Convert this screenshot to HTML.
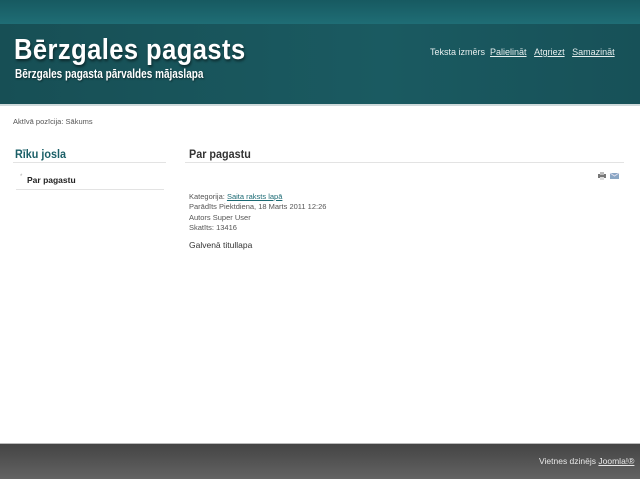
<!DOCTYPE html>
<html><head><meta charset="utf-8"><style>
body{margin:0;width:640px;height:478px;position:relative;background:#fff;font-family:"Liberation Sans",sans-serif;overflow:hidden}
.top{position:absolute;left:0;top:0;width:640px;height:24px;background:linear-gradient(#175a61,#1f6d75)}
.hdr{position:absolute;left:0;top:24px;width:640px;height:80px;background:linear-gradient(90deg,#174f55,#1a5a61 60%,#175158);border-bottom:2px solid #cfdadb}
.t1{position:absolute;left:14px;top:34px;color:#fff;font-size:29px;font-weight:bold;letter-spacing:0.5px;text-shadow:1px 2px 3px rgba(0,0,0,.5);transform:scaleX(0.88);transform-origin:0 0;white-space:nowrap}
.t2{position:absolute;left:15px;top:67px;color:#fff;font-size:12.5px;font-weight:bold;text-shadow:1px 1px 2px rgba(0,0,0,.5);transform:scaleX(0.8);transform-origin:0 0;white-space:nowrap}
.fs{position:absolute;left:430px;top:47px;color:#e6eeee;font-size:9px;white-space:nowrap}
.bc{position:absolute;left:13px;top:117px;font-size:7.5px;color:#555}
.h3{position:absolute;font-size:12px;font-weight:bold;transform:scaleX(0.9);transform-origin:0 0;white-space:nowrap}
.line{position:absolute;height:1px;background:#e3e3e3}
.meta{position:absolute;left:189px;top:192px;font-size:7.5px;color:#555;line-height:10.3px}
.meta a{color:#1b6a74;text-decoration:underline}
.ft{position:absolute;left:0;top:443px;width:640px;height:35px;background:linear-gradient(#444,#636363);border-top:1px solid #bbb}
</style></head><body>
<div class="top"></div><div class="hdr"></div>
<div class="t1">Bērzgales pagasts</div>
<div class="t2">Bērzgales pagasta pārvaldes mājaslapa</div>
<div class="fs">Teksta izmērs &nbsp;<u>Palielināt</u> &nbsp;&nbsp;<u>Atgriezt</u> &nbsp;&nbsp;<u>Samazināt</u></div>
<div class="bc">Aktīvā pozīcija: Sākums</div>
<div class="h3" style="left:15px;top:147px;color:#1b5f67">Rīku josla</div>
<div class="line" style="left:13px;top:162px;width:153px"></div>
<div style="position:absolute;left:20px;top:174px;font-size:6px;color:#aaa">*</div>
<div style="position:absolute;left:27px;top:175px;font-size:8.5px;font-weight:bold;color:#222">Par pagastu</div>
<div class="line" style="left:16px;top:189px;width:148px"></div>
<div class="h3" style="left:189px;top:147px;color:#333">Par pagastu</div>
<div class="line" style="left:185px;top:162px;width:439px"></div>
<svg style="position:absolute;left:597px;top:171px" width="24" height="9"><rect x="1" y="3" width="8" height="4" fill="#777"/><rect x="3" y="1" width="4" height="3" fill="#bbb"/><rect x="3" y="6" width="4" height="3" fill="#ddd"/><rect x="13" y="2" width="9" height="6" fill="#8aa6c4"/><path d="M13 2l4.5 3 4.5-3" stroke="#dde" fill="none"/></svg>
<div class="meta">Kategorija: <a>Saita raksts lapā</a><br>Parādīts Piektdiena, 18 Marts 2011 12:26<br>Autors Super User<br>Skatīts: 13416</div>
<div style="position:absolute;left:189px;top:240px;font-size:8.5px;color:#333">Galvenā titullapa</div>
<div class="ft"></div>
<div style="position:absolute;left:539px;top:456px;font-size:8.5px;color:#e8e8e8">Vietnes dzinējs <u>Joomla!®</u></div>
</body></html>
